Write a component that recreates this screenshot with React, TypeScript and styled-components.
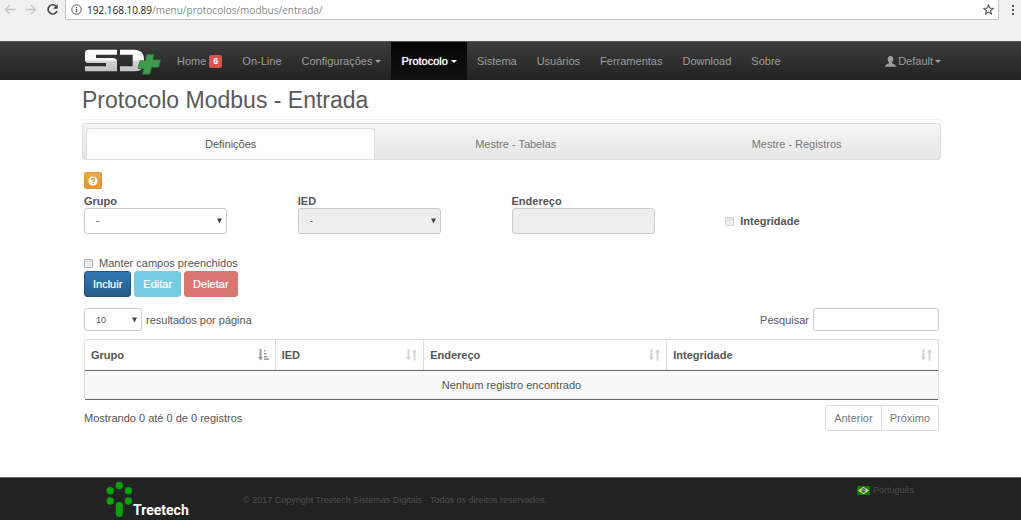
import React from 'react';
import styled, { createGlobalStyle } from 'styled-components';

const GlobalStyle = createGlobalStyle`
  *, *::before, *::after { box-sizing: border-box; }
  body {
    margin: 0;
    background: #fff;
    color: #555;
    font-family: "Liberation Sans", Arial, sans-serif;
    font-size: 11px;
    line-height: 16px;
  }
  button, input, select { font: inherit; color: inherit; margin: 0; }
`;

const Page = styled.div`
  display: flex;
  flex-direction: column;
  min-height: 100vh;
`;

/* Browser toolbar */
const BrowserBar = styled.div`
  display: flex;
  align-items: flex-start;
  height: 41px;
  background: #f1f1f1;
`;

const BrowserActions = styled.div`
  display: flex;
  gap: 9px;
  padding: 3px 6px 0 4px;
`;

const IconButton = styled.button`
  display: flex;
  padding: 0;
  border: 0;
  background: none;
  color: #555;
`;

const AddressBar = styled.div`
  display: flex;
  flex: 1;
  align-items: center;
  height: 20px;
  padding: 0 4px 0 5px;
  border: 1px solid #c4c4c4;
  border-top: 0;
  border-radius: 0 0 2px 2px;
  background: #fff;
  color: #888;
  font-family: "Open Sans", "Noto Sans", sans-serif;
  font-size: 10px;
`;

const AddressText = styled.span`
  flex: 1;
  padding-left: 5px;
`;

const AddressHost = styled.span`
  color: #222;
`;

const MenuSlot = styled.div`
  padding: 3px 5px 0 11px;
`;

/* Navigation */
const Navbar = styled.nav`
  display: flex;
  align-items: stretch;
  height: 39px;
  padding: 0 80px 0 82px;
  border-top: 1px solid #555;
  background: linear-gradient(#3c3c3c, #222);
`;

const Brand = styled.a`
  display: flex;
  align-items: center;
  padding: 1px 6px 0 2px;
`;

const NavLink = styled.a<{ $active?: boolean; $edge?: boolean }>`
  display: flex;
  align-items: center;
  gap: ${(p) => (p.$edge ? '2px' : '3px')};
  padding: ${(p) => (p.$edge ? '0' : '0 10px')};
  background: ${(p) => (p.$active ? 'linear-gradient(#050505, #111)' : 'none')};
  color: ${(p) => (p.$active ? '#fff' : '#9d9d9d')};
  text-shadow: ${(p) => (p.$active ? '0 0 1px #fff' : 'none')};
  text-decoration: none;
  white-space: nowrap;
`;

const Caret = styled.span`
  border: 3px solid transparent;
  border-top-color: currentColor;
  border-bottom: 0;
`;

const Badge = styled.span`
  padding: 0 4px;
  border-radius: 2px;
  background: #d9534f;
  color: #fff;
  font-size: 9px;
  font-weight: bold;
  line-height: 13px;
`;

const Spacer = styled.div`
  flex: 1;
`;

/* Content */
const Main = styled.main`
  flex: 1;
  padding: 0 80px 0 82px;
`;

const Title = styled.h1`
  margin: 0 0 3px;
  padding: 7px 0 6px;
  border-bottom: 1px solid #eee;
  color: #5a5a5a;
  font-size: 23px;
  font-weight: normal;
  line-height: 26px;
`;

const Tabs = styled.div`
  display: grid;
  grid-template-columns: 34% 33% 33%;
  height: 37px;
  padding: 4px 3px 0;
  border: 1px solid #ddd;
  border-radius: 3px;
  background: linear-gradient(#f5f5f5, #e6e6e6);
`;

const Tab = styled.button<{ $active?: boolean }>`
  border: ${(p) => (p.$active ? '1px solid #ddd' : '0')};
  border-bottom: 0;
  border-radius: 3px 3px 0 0;
  background: ${(p) => (p.$active ? '#fff' : 'none')};
  color: ${(p) => (p.$active ? '#555' : '#777')};
`;

const Panel = styled.div`
  padding: 12px 2px 46px;
`;

const HelpButton = styled.button`
  display: flex;
  align-items: center;
  justify-content: center;
  width: 18px;
  height: 17px;
  padding: 0;
  border: 1px solid #e0973a;
  border-radius: 2px;
  background: linear-gradient(#eba94c, #e6962a);
`;

const FieldGrid = styled.div`
  display: grid;
  grid-template-columns: repeat(4, 1fr);
  margin-top: 5px;
`;

const Field = styled.div`
  width: 67%;
`;

const FieldLabel = styled.label`
  display: block;
  line-height: 14px;
  font-weight: bold;
`;

const CheckLine = styled.label<{ $bold?: boolean }>`
  display: flex;
  align-items: center;
  align-self: ${(p) => (p.$bold ? 'center' : 'auto')};
  gap: 6px;
  padding-top: ${(p) => (p.$bold ? '14px' : '0')};
  font-weight: ${(p) => (p.$bold ? 'bold' : 'normal')};
`;

const Checkbox = styled.input`
  appearance: none;
  width: 9px;
  height: 9px;
  border: 1px solid #b0b0b0;
  border-radius: 1px;
  background: linear-gradient(#e4e4e4, #f0f0f0);
  &:disabled { border-color: #d4d4d4; }
`;

const SelectBox = styled.div<{ $compact?: boolean }>`
  position: relative;
  width: ${(p) => (p.$compact ? '58px' : '100%')};
  svg {
    position: absolute;
    top: 50%;
    right: 5px;
    margin-top: -3px;
    pointer-events: none;
  }
`;

const controlHeight = (compact?: boolean) => (compact ? '23px' : '26px');

const Select = styled.select<{ $compact?: boolean }>`
  appearance: none;
  display: block;
  width: 100%;
  height: ${(p) => controlHeight(p.$compact)};
  padding: 0 11px;
  border: 1px solid #ccc;
  border-radius: 3px;
  background: #fff;
  font-size: ${(p) => (p.$compact ? '9px' : '10px')};
  opacity: 1;
  &:disabled { background: #eee; color: #555; }
`;

const TextInput = styled.input<{ $compact?: boolean }>`
  display: block;
  width: ${(p) => (p.$compact ? '126px' : '100%')};
  height: ${(p) => controlHeight(p.$compact)};
  padding: 0 8px;
  border: 1px solid #ccc;
  border-radius: 3px;
  background: #fff;
  &:disabled { background: #eee; }
`;

const KeepRow = styled.div`
  display: flex;
  margin-top: 21px;
`;

const ButtonRow = styled.div`
  display: flex;
  gap: 3px;
`;

const tones = {
  primary: { fill: 'linear-gradient(#337ab7, #265a88)', edge: '#245580' },
  info: { fill: '#77cbe4', edge: '#77cbe4' },
  danger: { fill: '#d87672', edge: '#d87672' },
};

const ActionButton = styled.button<{ $tone: keyof typeof tones }>`
  height: 26px;
  padding: 0 8px;
  border: 1px solid ${(p) => tones[p.$tone].edge};
  border-radius: 3px;
  background: ${(p) => tones[p.$tone].fill};
  color: #fff;
  text-shadow: 0 0 1px rgba(255, 255, 255, 0.6);
`;

const SplitRow = styled.div<{ $top: number }>`
  display: flex;
  align-items: center;
  justify-content: space-between;
  margin-top: ${(p) => p.$top}px;
`;

const InlineLabel = styled.label`
  display: flex;
  align-items: center;
  gap: 4px;
`;

const TableFrame = styled.div`
  margin-top: 8px;
  border: 1px solid #ddd;
  border-bottom: 0;
  border-radius: 3px;
`;

const Table = styled.table`
  width: 100%;
  border-collapse: collapse;
  table-layout: fixed;
`;

const HeadCell = styled.th<{ $width: string }>`
  width: ${(p) => p.$width};
  height: 30px;
  padding: 0 6px;
  border-bottom: 1px solid #666;
  text-align: left;
  & + & { border-left: 1px solid #ddd; }
`;

const HeadContent = styled.div`
  display: flex;
  align-items: center;
  justify-content: space-between;
`;

const EmptyCell = styled.td`
  height: 29px;
  padding: 0;
  border-bottom: 1px solid #666;
  background: #f8f8f8;
  text-align: center;
`;

const Pager = styled.div`
  display: flex;
`;

const PageButton = styled.button`
  height: 26px;
  padding: 0 8px;
  border: 1px solid #ddd;
  background: #fff;
  color: #777;
  &:first-child { border-radius: 3px 0 0 3px; }
  &:last-child { border-left: 0; border-radius: 0 3px 3px 0; }
`;

/* Footer */
const Footer = styled.footer`
  display: flex;
  align-items: flex-start;
  height: 43px;
  padding: 0 107px 0 106px;
  border-top: 1px solid #666;
  background: #222;
  color: #4e4e4e;
  font-size: 9px;
`;

const FooterBrand = styled.a`
  display: flex;
  align-items: flex-end;
  width: 137px;
  padding-top: 3px;
  color: #fff;
  font-family: Roboto, "Liberation Sans", sans-serif;
  font-size: 14px;
  font-weight: bold;
  line-height: 15px;
  text-decoration: none;
`;

const Copyright = styled.p`
  flex: 1;
  margin: 0;
  padding-top: 14px;
`;

const Language = styled.a`
  display: flex;
  align-items: center;
  gap: 3px;
  padding-top: 4px;
  color: inherit;
  text-decoration: none;
`;

const Arrow = ({ back }: { back?: boolean }) => (
  <svg width="12" height="13" viewBox="0 0 12 13" fill="none" stroke="#c6c6c6" strokeWidth="1.4">
    <path d={back ? 'M11.5 6.5H1.5M6 2L1.5 6.5L6 11' : 'M.5 6.5H10.500M6 2L10.500 6.5L6 11'} />
  </svg>
);

const Reload = () => (
  <svg width="13" height="13" viewBox="0 0 13 13" fill="none" stroke="#4a4a4a" strokeWidth="1.7">
    <path d="M10.300 3.500A4.600 4.600 0 1 0 11 8" />
    <path d="M11.700 1V5.700H7Z" fill="#4a4a4a" stroke="none" />
  </svg>
);

const Info = () => (
  <svg width="11" height="11" viewBox="0 0 11 11" fill="none" stroke="#555">
    <circle cx="5.500" cy="5.500" r="4.700" />
    <path d="M5.500 4.800V8.200M5.500 2.700V3.900" strokeWidth="1.200" />
  </svg>
);

const Star = () => (
  <svg width="11" height="11" viewBox="0 0 11 11" fill="none" stroke="#555" strokeWidth="1.100">
    <path d="M5.500 1L6.800 4.100L10.200 4.400L7.600 6.600L8.400 9.900L5.500 8.100L2.600 9.900L3.400 6.600L.8 4.400L4.200 4.100Z" />
  </svg>
);

const Dots = () => (
  <svg width="6" height="13" viewBox="0 0 6 13" fill="#555">
    <rect x="2" y="2" width="2" height="2" />
    <rect x="2" y="6" width="2" height="2" />
    <rect x="2" y="10" width="2" height="2" />
  </svg>
);

const ProductLogo = () => (
  <svg width="77" height="26" viewBox="252 146 231 78" role="img" aria-label="SD+">
    <defs>
      <linearGradient id="metal" x1="0" y1="0" x2="0" y2="1">
        <stop offset="0" stopColor="#fff" />
        <stop offset=".48" stopColor="#f4f4f4" />
        <stop offset=".56" stopColor="#cfcfcf" />
        <stop offset="1" stopColor="#c2c2c2" />
      </linearGradient>
    </defs>
    <path fill="url(#metal)" d="M266 148H351V163H288V173H338Q351 173 351 184V213H255V198H318V188H266Q255 188 255 178V158Q255 148 266 148Z" />
    <path fill="url(#metal)" d="M360 148H406Q432 150 432 178V184Q432 213 406 213H360V198H398V163H360Z" />
    <path fill="#3f9a49" stroke="#27622e" strokeWidth="2" d="M440 162H463L459 178H482L477 201H455L450 222H427L431 205H414L420 181H436Z" />
  </svg>
);

const UserIcon = () => (
  <svg width="11" height="11" viewBox="0 0 11 11" fill="#9d9d9d">
    <path d="M5.500 0C7.500 0 8.500 1.300 8.300 3.200C8.200 4.800 7.600 5.700 7 6.400V7.300C8 8 10.700 8.400 10.900 10.700H.1C.3 8.400 3 8 4 7.300V6.400C3.400 5.700 2.800 4.800 2.700 3.200C2.500 1.300 3.500 0 5.500 0Z" />
  </svg>
);

const Question = () => (
  <svg width="10" height="10" viewBox="0 0 10 10">
    <circle cx="5" cy="5" r="4.600" fill="#fff" />
    <path d="M3.500 4Q3.500 2.500 5 2.500T6.500 3.900Q6.500 4.700 5.100 5.200V6.100M5.100 6.800V8" fill="none" stroke="#e49a2c" strokeWidth="1.300" />
  </svg>
);

const DropArrow = () => (
  <svg width="5" height="6" viewBox="0 0 5 6" fill="#444">
    <path d="M0 .5H5L2.500 5.500Z" />
  </svg>
);

const SortIcon = ({ sorted }: { sorted?: boolean }) => (
  <svg width="11" height="12" viewBox="0 0 11 12" fill={sorted ? '#999' : '#d6d6d6'}>
    <path d="M1.500 0H3.500V8H5L2.500 11.500L0 8H1.500Z" />
    {sorted ? (
      <path d="M6 1H7.500V2.500H6ZM6 4H8.500V5.500H6ZM6 7H9.500V8.500H6ZM6 9.500H11V11H6Z" />
    ) : (
      <path d="M7.500 11.500H9.500V3.500H11L8.500 0L6 3.500H7.500Z" />
    )}
  </svg>
);

const TreeLogo = () => (
  <svg width="27" height="37" viewBox="0 0 27 37" fill="#0aa20a">
    <circle cx="13.300" cy="4.500" r="3.700" />
    <circle cx="4.200" cy="9.700" r="3.700" />
    <circle cx="22.400" cy="9.700" r="3.700" />
    <circle cx="4.200" cy="20" r="3.700" />
    <circle cx="22.400" cy="20" r="3.700" />
    <rect x="9.800" y="21" width="7" height="15" rx="3.500" />
  </svg>
);

const Flag = () => (
  <svg width="13" height="9" viewBox="0 0 13 9">
    <rect width="13" height="9" fill="#0a7a10" />
    <path d="M6.500 .8L12 4.500L6.500 8.200L1 4.500Z" fill="#f0e43a" />
    <circle cx="6.500" cy="4.500" r="2.200" fill="#2b4f9c" />
    <path d="M4.500 4Q6.500 3.600 8.500 5.200" stroke="#dfe8f5" strokeWidth=".6" fill="none" />
  </svg>
);

const columns = [
  { name: 'Grupo', width: '22.300%', sorted: true },
  { name: 'IED', width: '17.400%' },
  { name: 'Endereço', width: '28.500%' },
  { name: 'Integridade', width: '31.800%' },
];

export default function App() {
  return (
    <Page>
      <GlobalStyle />
      <BrowserBar>
        <BrowserActions>
          <IconButton aria-label="Voltar"><Arrow back /></IconButton>
          <IconButton aria-label="Avançar"><Arrow /></IconButton>
          <IconButton aria-label="Recarregar"><Reload /></IconButton>
        </BrowserActions>
        <AddressBar>
          <Info />
          <AddressText>
            <AddressHost>192.168.10.89</AddressHost>/menu/protocolos/modbus/entrada/
          </AddressText>
          <IconButton aria-label="Favorito"><Star /></IconButton>
        </AddressBar>
        <MenuSlot>
          <IconButton aria-label="Menu"><Dots /></IconButton>
        </MenuSlot>
      </BrowserBar>

      <Navbar>
        <Brand href="#"><ProductLogo /></Brand>
        <NavLink href="#">Home <Badge>6</Badge></NavLink>
        <NavLink href="#">On-Line</NavLink>
        <NavLink href="#">Configurações<Caret /></NavLink>
        <NavLink href="#" $active>Protocolo<Caret /></NavLink>
        <NavLink href="#">Sistema</NavLink>
        <NavLink href="#">Usuários</NavLink>
        <NavLink href="#">Ferramentas</NavLink>
        <NavLink href="#">Download</NavLink>
        <NavLink href="#">Sobre</NavLink>
        <Spacer />
        <NavLink href="#" $edge><UserIcon />Default<Caret /></NavLink>
      </Navbar>

      <Main>
        <Title>Protocolo Modbus - Entrada</Title>
        <Tabs role="tablist">
          <Tab role="tab" aria-selected="true" $active>Definições</Tab>
          <Tab role="tab" aria-selected="false">Mestre - Tabelas</Tab>
          <Tab role="tab" aria-selected="false">Mestre - Registros</Tab>
        </Tabs>

        <Panel>
          <HelpButton aria-label="Ajuda"><Question /></HelpButton>
          <FieldGrid>
            <Field>
              <FieldLabel htmlFor="grupo">Grupo</FieldLabel>
              <SelectBox>
                <Select id="grupo"><option>-</option></Select>
                <DropArrow />
              </SelectBox>
            </Field>
            <Field>
              <FieldLabel htmlFor="ied">IED</FieldLabel>
              <SelectBox>
                <Select id="ied" disabled><option>-</option></Select>
                <DropArrow />
              </SelectBox>
            </Field>
            <Field>
              <FieldLabel htmlFor="endereco">Endereço</FieldLabel>
              <TextInput id="endereco" type="text" disabled />
            </Field>
            <CheckLine $bold>
              <Checkbox type="checkbox" disabled />Integridade
            </CheckLine>
          </FieldGrid>

          <KeepRow>
            <CheckLine><Checkbox type="checkbox" />Manter campos preenchidos</CheckLine>
          </KeepRow>
          <ButtonRow>
            <ActionButton $tone="primary">Incluir</ActionButton>
            <ActionButton $tone="info">Editar</ActionButton>
            <ActionButton $tone="danger">Deletar</ActionButton>
          </ButtonRow>

          <SplitRow $top={11}>
            <InlineLabel>
              <SelectBox $compact>
                <Select $compact><option>10</option></Select>
                <DropArrow />
              </SelectBox>
              resultados por página
            </InlineLabel>
            <InlineLabel>
              Pesquisar
              <TextInput $compact type="search" />
            </InlineLabel>
          </SplitRow>

          <TableFrame>
            <Table>
              <thead>
                <tr>
                  {columns.map((c) => (
                    <HeadCell key={c.name} $width={c.width}>
                      <HeadContent>{c.name}<SortIcon sorted={c.sorted} /></HeadContent>
                    </HeadCell>
                  ))}
                </tr>
              </thead>
              <tbody>
                <tr><EmptyCell colSpan={4}>Nenhum registro encontrado</EmptyCell></tr>
              </tbody>
            </Table>
          </TableFrame>

          <SplitRow $top={5}>
            <span>Mostrando 0 até 0 de 0 registros</span>
            <Pager>
              <PageButton>Anterior</PageButton>
              <PageButton>Próximo</PageButton>
            </Pager>
          </SplitRow>
        </Panel>
      </Main>

      <Footer>
        <FooterBrand href="#"><TreeLogo />Treetech</FooterBrand>
        <Copyright>© 2017 Copyright Treetech Sistemas Digitais · Todos os direitos reservados.</Copyright>
        <Language href="#"><Flag />Português</Language>
      </Footer>
    </Page>
  );
}
